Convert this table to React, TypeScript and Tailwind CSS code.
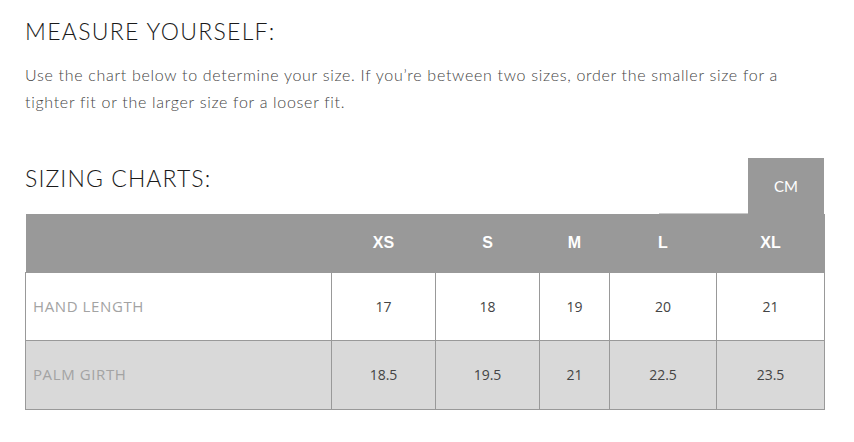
import React from "react";

const sizes = ["XS", "S", "M", "L", "XL"];
const rows = [
  { label: "HAND LENGTH", values: ["17", "18", "19", "20", "21"], bg: "bg-white" },
  { label: "PALM GIRTH", values: ["18.5", "19.5", "21", "22.5", "23.5"], bg: "bg-[#d9d9d9]" },
];
const colW = ["w-[306px]", "w-[104px]", "w-[104px]", "w-[70px]", "w-[107px]", "w-[108px]"];

export default function App() {
  return (
    <div className="w-[854px] h-[442px] bg-white pl-[25px] pt-[15px] font-['Lato',sans-serif] text-[#222]">
      <h1 className="text-[23px] leading-[32px] font-light tracking-[1.3px] text-[#1a1a1a]">MEASURE YOURSELF:</h1>
      <p className="mt-[14px] w-[765px] text-[16px] leading-[27px] font-light tracking-[0.7px] text-[#444]">
        Use the chart below to determine your size. If you’re between two sizes, order the smaller size for a tighter fit or the larger size for a looser fit.
      </p>
      <div className="mt-[43px] w-[799px]">
        <div className="flex items-end justify-between">
          <h2 className="mb-[21px] text-[23px] leading-[30px] font-light tracking-[1.1px] text-[#1a1a1a]">SIZING CHARTS:</h2>
          <div className="relative flex h-[56px] w-[76px] items-center justify-center bg-[#999999] pt-[1px] text-[15px] text-white">
            CM
          </div>
        </div>
        <div className="relative">
          <div className="absolute right-[76px] top-[-1px] h-px w-[89px] bg-[#c8c8c8]" />
          <table className="w-[799px] table-fixed border-collapse font-['Open_Sans',sans-serif]">
            <thead>
              <tr className="h-[58px] bg-[#999999]">
                <th className={colW[0]} />
                {sizes.map((s, i) => (
                  <th key={s} className={`${colW[i + 1]} text-center text-[16px] font-bold text-white font-['Liberation_Sans',sans-serif]`}>
                    {s}
                  </th>
                ))}
              </tr>
            </thead>
            <tbody>
              {rows.map((r, ri) => (
                <tr key={r.label} className={`${ri === 0 ? "h-[68px]" : "h-[69px]"} ${r.bg}`}>
                  <td className="border border-[#999999] pl-[7px] text-left text-[15px] tracking-[0.6px] text-[#a3a3a3]">
                    {r.label}
                  </td>
                  {r.values.map((v, i) => (
                    <td key={i} className="border border-[#999999] text-center text-[14px] text-[#444]">
                      {v}
                    </td>
                  ))}
                </tr>
              ))}
            </tbody>
          </table>
        </div>
      </div>
    </div>
  );
}
